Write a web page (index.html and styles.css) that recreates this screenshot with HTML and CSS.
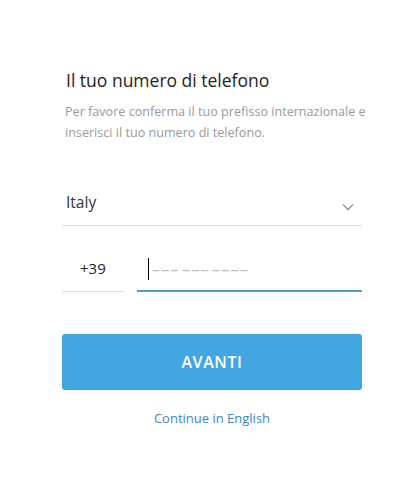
FILE: index.html
```html
<!DOCTYPE html>
<html>
<head>
<meta name="viewport" content="width=device-width, initial-scale=1">
<title>Telegram</title>
<link rel="stylesheet" href="styles.css">
</head>
<body>

<div class="login">
  <h3 class="title">Il tuo numero di telefono</h3>
  <p class="lead">Per favore conferma il tuo prefisso internazionale e inserisci il tuo numero di telefono.</p>

  <div class="country">
    <span>Italy</span>
    <svg class="chevron" width="12" height="8" viewBox="0 0 12 8"><path d="M1 1.5l5 5 5-5" fill="none" stroke="#9a9a9a" stroke-width="1.6"/></svg>
  </div>

  <div class="phone">
    <div class="code">+39</div>
    <div class="number">
      <span class="caret"></span>
      <span class="placeholder">––– ––– ––––</span>
    </div>
  </div>

  <button class="next">AVANTI</button>

  <a class="lang" href="#">Continue in English</a>
</div>

</body>
</html>
```

FILE: styles.css
```css
body {
  margin: 0;
  background: #fff;
  font-family: "Open Sans", "Noto Sans", sans-serif;
}

* {
  box-sizing: border-box;
}

/* main column */
.login {
  width: 300px;
  margin-left: 62px;
  padding-top: 67px;
  display: flex;
  flex-direction: column;
}

.title {
  margin: 0 0 0 4px;
  font-size: 17.5px;
  font-weight: 400;
  color: #222;
  line-height: 26px;
}

.lead {
  margin: 8px 0 0 3px;
  width: 330px;
  font-size: 12.6px;
  line-height: 21px;
  color: #9a9a9a;
}

/* country select */
.country {
  margin-top: 42px;
  height: 41px;
  padding: 0 8px 6px 4px;
  border-bottom: 1px solid #e0e0e0;
  display: flex;
  align-items: center;
  justify-content: space-between;
  font-size: 15.5px;
  color: #333;
}

.chevron {
  margin-top: 10px;
}

/* phone row */
.phone {
  margin-top: 24px;
  display: flex;
  gap: 12px;
  height: 42px;
}

.code {
  width: 63px;
  padding-left: 18px;
  border-bottom: 1px solid #e0e0e0;
  font-size: 15px;
  line-height: 36px;
  color: #222;
}

.number {
  flex: 1;
  border-bottom: 2px solid #4f9dc9;
  display: flex;
  align-items: center;
  padding-left: 11px;
  padding-bottom: 2px;
}

.caret {
  width: 1px;
  height: 22px;
  background: #000;
  margin-right: 3px;
}

.placeholder {
  font-size: 16.5px;
  line-height: 22px;
  color: #bbb;
  letter-spacing: 1px;
  word-spacing: -3px;
}

/* button */
.next {
  margin-top: 42px;
  height: 56px;
  border: none;
  border-radius: 3px;
  background: #42a6e2;
  color: #fff;
  font-family: inherit;
  font-size: 16px;
  font-weight: 600;
  letter-spacing: 0.6px;
  cursor: pointer;
}

.lang {
  margin-top: 19px;
  align-self: center;
  font-size: 13px;
  color: #3b88c3;
  text-decoration: none;
}
```
